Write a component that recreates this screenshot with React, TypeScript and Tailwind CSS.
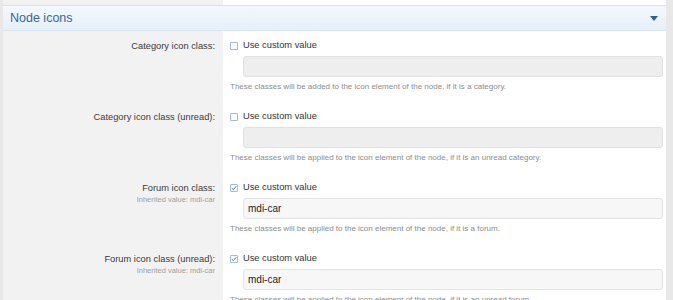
import React from 'react';

type Row = {
  label: string;
  inherited?: string;
  checked: boolean;
  value: string;
  hint: string;
};

const rows: Row[] = [
  {
    label: 'Category icon class:',
    checked: false,
    value: '',
    hint: 'These classes will be added to the icon element of the node, if it is a category.',
  },
  {
    label: 'Category icon class (unread):',
    checked: false,
    value: '',
    hint: 'These classes will be applied to the icon element of the node, if it is an unread category.',
  },
  {
    label: 'Forum icon class:',
    inherited: 'Inherited value: mdi-car',
    checked: true,
    value: 'mdi-car',
    hint: 'These classes will be applied to the icon element of the node, if it is a forum.',
  },
  {
    label: 'Forum icon class (unread):',
    inherited: 'Inherited value: mdi-car',
    checked: true,
    value: 'mdi-car',
    hint: 'These classes will be applied to the icon element of the node, if it is an unread forum.',
  },
];

const Checkbox: React.FC<{ checked: boolean }> = ({ checked }) => (
  <span className="w-[8px] h-[8px] rounded-[1px] border border-[#9dbcdc] bg-white flex items-center justify-center shrink-0">
    {checked && (
      <svg width="6" height="6" viewBox="0 0 6 6" fill="none">
        <path d="M0.8 3.1 L2.4 4.6 L5.2 1.2" stroke="#3b78b8" strokeWidth="1" />
      </svg>
    )}
  </span>
);

const FormRow: React.FC<{ row: Row }> = ({ row }) => (
  <div className="flex h-[71px]">
    <div className="w-[220px] bg-[#f2f2f2] pr-[8px] pt-[9px] text-right">
      <div className="h-[12px] leading-[12px] text-[9.3px] text-[#3a3a3a]">{row.label}</div>
      {row.inherited && (
        <div className="leading-[11px] text-[7.5px] text-[#a0a0a0]">{row.inherited}</div>
      )}
    </div>
    <div className="flex-1 bg-white pl-[7px] pr-[3px] pt-[9px]">
      <label className="flex items-center gap-[5px] h-[12px] text-[9.3px] text-[#333]">
        <Checkbox checked={row.checked} />
        <span>Use custom value</span>
      </label>
      <div
        className={
          row.checked
            ? 'ml-[13px] mt-[4px] h-[21px] rounded-[3px] border border-[#e3e3e3] bg-[#f7f7f7] pl-[4px] flex items-center text-[10px] text-[#222]'
            : 'ml-[13px] mt-[4px] h-[21px] rounded-[3px] border border-[#e0e0e0] bg-[#eeeeee] pl-[4px] flex items-center text-[10px] text-[#222]'
        }
      >
        {row.value}
      </div>
      <div className="mt-[5px] h-[10px] leading-[10px] text-[8px] text-[#8c8c8c] whitespace-nowrap">
        {row.hint}
      </div>
    </div>
  </div>
);

export default function App() {
  return (
    <div
      className="w-[673px] h-[300px] overflow-hidden bg-[#e8e8e8] pl-[3px] pr-[7px]"
      style={{ fontFamily: '"Liberation Sans", Arial, sans-serif' }}
    >
      <div className="flex h-[5px]">
        <div className="w-[220px] bg-[#f2f2f2]" />
        <div className="flex-1 bg-white" />
      </div>
      <div className="h-[26px] flex items-center justify-between pl-[7px] pr-[8px] border-y border-[#d6e4f2] bg-gradient-to-b from-[#f3f8fd] to-[#e6f0fa]">
        <span className="text-[12.5px] text-[#34679f]">Node icons</span>
        <svg width="8" height="5" viewBox="0 0 8 5">
          <path d="M0 0 H8 L4 5 Z" fill="#2d5f98" />
        </svg>
      </div>
      {rows.map((row) => (
        <FormRow key={row.label} row={row} />
      ))}
    </div>
  );
}
